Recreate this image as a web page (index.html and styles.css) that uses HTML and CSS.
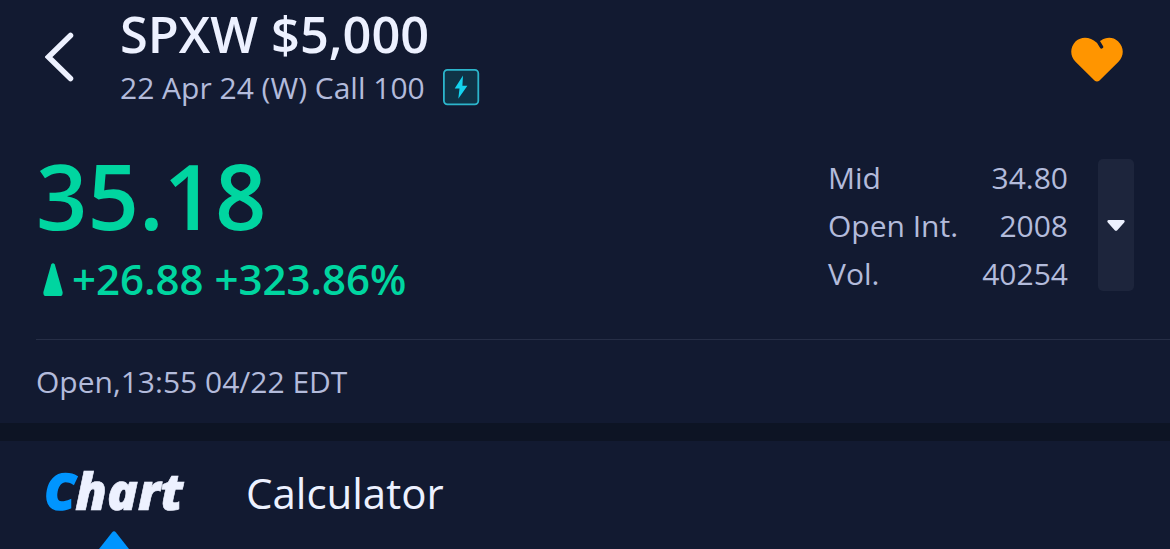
FILE: index.html
```html
<!DOCTYPE html>
<html lang="en">
<head>
  <meta charset="UTF-8" />
  <meta name="viewport" content="width=device-width, initial-scale=1.0"/>
  <title>SPXW $5,000</title>
  <link rel="stylesheet" href="styles.css">
</head>
<body>
  <header class="header">
    <svg class="back" width="30" height="50" viewBox="0 0 30 50">
      <path d="M25.500 3.500 L3.500 25 L25.500 46.500" />
    </svg>
    <div class="contract">
      <h1>SPXW $5,000</h1>
      <div class="details">
        <span class="expiry">22 Apr 24 (W) Call 100</span>
        <svg class="bolt" width="38" height="38" viewBox="0 0 38 38">
          <rect x="1.9" y="1.9" width="34.4" height="34.4" rx="3.5" />
          <path d="M21 7.500 L12.700 20.500 H17.500 L16.300 30.800 L25.400 17.800 H20.400 Z" />
        </svg>
      </div>
    </div>
    <svg class="heart" width="54" height="48" viewBox="0 0 54 48">
      <path class="heart-shape" d="M31 4.500 C36 .800 43 .500 48 5.300 C54.500 11.500 54 20 48.500 25.700 L29.500 44.500 Q27 46.700 24.500 44.500 L5.500 25.700 C-.2 20 -.2 11.500 5.700 5.300 C11.500 -.2 20.500 .800 26.500 6.500 Z" />
      <path class="heart-cut" d="M25.500 1 L31.500 10.800" />
    </svg>
  </header>

  <section class="quote">
    <div class="price-box">
      <div class="price">35.18</div>
      <div class="change">
        <svg class="up" width="20" height="33" viewBox="0 0 20 33">
          <path d="M8.200 1.500 Q10 -1 11.800 1.500 L19.600 29 Q20 33 17 33 H3 Q0 33 .4 29 Z" />
        </svg>
        <span>+26.88 +323.86%</span>
      </div>
    </div>
    <dl class="stats">
      <dt>Mid</dt><dd>34.80</dd>
      <dt>Open Int.</dt><dd>2008</dd>
      <dt>Vol.</dt><dd>40254</dd>
    </dl>
    <div class="expand">
      <svg width="18" height="12" viewBox="0 0 18 12">
        <path d="M1.500 0 H16.500 Q18.500 .6 17.200 2.500 L10.500 10 Q9 11.700 7.500 10 L.8 2.500 Q-.5 .6 1.500 0 Z" />
      </svg>
    </div>
  </section>

  <div class="status">Open,13:55 04/22 EDT</div>

  <nav class="tabs">
    <div class="tab active">
      <span class="tab-label"><span class="initial">C</span>hart</span>
      <svg class="marker" width="30" height="18" viewBox="0 0 30 18">
        <path d="M0 18 L13 1.500 Q15 -.8 17 1.500 L30 18 Z" />
      </svg>
    </div>
    <div class="tab">Calculator</div>
  </nav>
</body>
</html>
```

FILE: styles.css
```css
* {
  box-sizing: border-box;
}

body {
  margin: 0;
  height: 549px;
  overflow: hidden;
  background: #121a31;
  color: #b3bbdb;
  font-family: "Open Sans", "Noto Sans", sans-serif;
  font-size: 30px;
  white-space: nowrap;
}

svg {
  display: block;
  flex: none;
}

.header {
  display: flex;
  height: 144px;
  padding: 4px 46px 0 45px;
}

.back {
  margin-top: 28px;
  fill: none;
  stroke: #edf1ff;
  stroke-width: 5.5;
  stroke-linecap: round;
}

.contract {
  margin-left: 45px;
}

h1 {
  margin: 0;
  color: #edf1ff;
  font-size: 50.5px;
  font-weight: 600;
  line-height: 60px;
}

.details {
  display: flex;
  align-items: center;
  gap: 17px;
  line-height: 48px;
}

.bolt {
  margin-top: -2px;
}

.bolt rect {
  fill: #0f3346;
  stroke: #2cb5cb;
  stroke-width: 1.8;
}

.bolt path {
  fill: #14d3ee;
}

.heart {
  margin: 32px 0 0 auto;
}

.heart-shape {
  fill: #ff9500;
}

.heart-cut {
  fill: none;
  stroke: #121a31;
  stroke-width: 3.5;
  stroke-linecap: round;
}

.quote {
  display: flex;
  height: 196px;
  margin-left: 36px;
  padding-right: 36px;
  border-bottom: 1px solid #262e46;
}

.price-box {
  color: #00d5a0;
  font-weight: 570;
}

.price {
  font-size: 90px;
  line-height: 102px;
}

.change {
  display: flex;
  align-items: center;
  gap: 9px;
  padding-left: 7px;
  font-size: 42px;
  line-height: 66px;
}

.up {
  fill: #00d5a0;
}

.stats {
  display: grid;
  grid-template-columns: auto auto;
  align-content: start;
  justify-content: space-between;
  width: 240px;
  margin: 10px 30px 0 auto;
  line-height: 48px;
}

.stats dd {
  margin: 0;
  text-align: right;
}

.expand {
  display: flex;
  align-items: center;
  justify-content: center;
  width: 36px;
  height: 132px;
  margin-top: 15px;
  border-radius: 5px;
  background: #1d253c;
}

.expand svg {
  margin-top: 2px;
  fill: #edf1ff;
}

.status {
  height: 83px;
  padding-left: 36px;
  line-height: 84px;
}

.tabs {
  display: flex;
  height: 126px;
  padding-left: 44px;
  border-top: 18px solid #0d1424;
  color: #edf1ff;
  font-size: 42px;
  line-height: 103px;
}

.tab.active {
  display: flex;
  flex-direction: column;
  align-items: center;
  width: 140px;
  margin-right: 62px;
}

.tab-label {
  height: 90px;
  font-size: 51px;
  font-style: italic;
  font-weight: 800;
  line-height: 99px;
  -webkit-text-stroke: 0.6px;
}

.initial {
  color: #0095ff;
  font-size: 49px;
  -webkit-text-stroke: 1.6px;
}

.marker {
  fill: #0095ff;
}
```
